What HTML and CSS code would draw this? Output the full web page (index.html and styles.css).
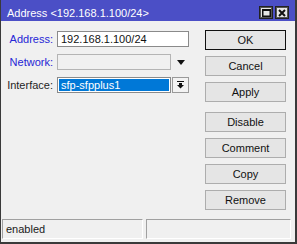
FILE: index.html
```html
<!DOCTYPE html>
<html lang="en">
<head>
    <meta charset="UTF-8">
    <title>Address &lt;192.168.1.100/24&gt;</title>
    <link rel="stylesheet" href="styles.css">
</head>
<body>
    <div class="window">
        <div class="titlebar">
            <span class="title">Address &lt;192.168.1.100/24&gt;</span>
            <div class="title-buttons">
                <span class="tbtn">
                    <svg width="9" height="8" viewBox="0 0 9 8"><rect x="0.75" y="1" width="7.5" height="6.25" fill="none" stroke="#111" stroke-width="1.5"/><rect x="0" y="0" width="9" height="2" fill="#111"/></svg>
                </span>
                <span class="tbtn">
                    <svg width="8" height="8" viewBox="0 0 8 8"><path d="M1 1 L7 7 M7 1 L1 7" stroke="#111" stroke-width="2"/></svg>
                </span>
            </div>
        </div>

        <div class="content">
            <div class="form">
                <label class="lbl lbl-blue">Address:</label>
                <div class="field">
                    <div class="input">192.168.1.100/24</div>
                </div>

                <label class="lbl lbl-blue">Network:</label>
                <div class="field">
                    <div class="input input-disabled"></div>
                    <span class="side">
                        <svg width="8" height="5" viewBox="0 0 8 5"><path d="M0 0 H8 L4 5 Z" fill="#111"/></svg>
                    </span>
                </div>

                <label class="lbl">Interface:</label>
                <div class="field">
                    <div class="input select"><span class="sel">sfp-sfpplus1</span></div>
                    <span class="side drop-btn">
                        <svg width="7" height="8" viewBox="0 0 7 8"><rect x="0" y="0" width="7" height="1" fill="#111"/><rect x="2" y="2" width="3" height="2" fill="#111"/><path d="M0 4 H7 L3.5 7.5 Z" fill="#111"/></svg>
                    </span>
                </div>
            </div>

            <div class="buttons">
                <button class="btn btn-default">OK</button>
                <button class="btn">Cancel</button>
                <button class="btn">Apply</button>
                <button class="btn btn-gap">Disable</button>
                <button class="btn">Comment</button>
                <button class="btn">Copy</button>
                <button class="btn">Remove</button>
            </div>
        </div>

        <div class="statusbar">
            <div class="panel panel-first">enabled</div>
            <div class="panel"></div>
        </div>
    </div>
</body>
</html>
```

FILE: styles.css
```css
html, body {
    margin: 0;
    padding: 0;
    background: #f0f0f0;
}

.window {
    width: 297px;
    height: 244px;
    box-sizing: border-box;
    border-left: 1px solid #3a3a3a;
    border-right: 2px solid #3a3a3a;
    border-bottom: 2px solid #3a3a3a;
    background: #f0f0f0;
    display: flex;
    flex-direction: column;
    font-family: "Liberation Sans", Arial, sans-serif;
    font-size: 11px;
    color: #1a1a1a;
}

/* title bar */
.titlebar {
    height: 21px;
    flex: none;
    background: #4b4fc6;
    color: #fff;
    display: flex;
    justify-content: space-between;
    align-items: flex-start;
    padding: 0 6px 0 6px;
}

.title {
    font-size: 11px;
    line-height: 13px;
    padding-top: 7px;
}

.title-buttons {
    display: flex;
    gap: 2px;
    padding-top: 6px;
}

.tbtn {
    width: 14px;
    height: 13px;
    box-sizing: border-box;
    border: 1px solid #222;
    box-shadow: inset 0 0 0 1px #555;
    background: #e6e6e6;
    display: flex;
    align-items: center;
    justify-content: center;
}

.tbtn svg {
    display: block;
}

/* main area */
.content {
    flex: 1;
    display: flex;
    padding: 9px 9px 0 0;
}

.form {
    width: 188px;
    margin-top: 1px;
    display: grid;
    grid-template-columns: 52px 132px;
    column-gap: 4px;
    row-gap: 7px;
    align-content: start;
}

.lbl {
    text-align: right;
    height: 16px;
    line-height: 16px;
    color: #1f1f1f;
}

.lbl-blue {
    color: #2626d6;
}

.field {
    display: flex;
    height: 16px;
    gap: 1px;
}

.input {
    flex: 1;
    box-sizing: border-box;
    border: 1px solid #8a8a8a;
    background: #fff;
    line-height: 14px;
    padding: 0 3px;
    color: #111;
    white-space: nowrap;
}

.input-disabled {
    background: #f0f0f0;
    border-color: #b4b4b4;
}

.select {
    padding: 1px 1px;
}

.sel {
    display: block;
    background: #0078d7;
    color: #fff;
    height: 12px;
    line-height: 12px;
    padding-left: 2px;
}

.side {
    width: 17px;
    flex: none;
    box-sizing: border-box;
    display: flex;
    align-items: center;
    justify-content: center;
}

.side svg {
    display: block;
}

.drop-btn {
    border: 1px solid #9a9a9a;
    background: #f3f3f3;
}

/* buttons column */
.buttons {
    margin-left: auto;
    width: 81px;
    display: flex;
    flex-direction: column;
    gap: 6px;
}

.btn {
    height: 20px;
    margin: 0;
    padding: 0;
    box-sizing: border-box;
    border: 1px solid #adadad;
    background: #e5e5e5;
    font-family: inherit;
    font-size: 11px;
    color: #111;
}

.btn-default {
    border: 1px solid #111;
}

.btn-gap {
    margin-top: 4px;
}

/* status bar */
.statusbar {
    flex: none;
    display: flex;
    gap: 3px;
    padding: 0 4px 3px 1px;
}

.panel {
    flex: 1;
    height: 20px;
    box-sizing: border-box;
    border-top: 1px solid #a0a0a0;
    border-left: 1px solid #a0a0a0;
    border-right: 1px solid #fff;
    border-bottom: 1px solid #fff;
    line-height: 18px;
    padding-left: 3px;
    color: #1a1a1a;
}

.panel-first {
    flex: none;
    width: 141px;
}
```
